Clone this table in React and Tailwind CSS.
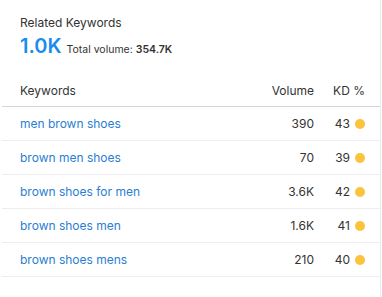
import React from 'react';

const rows = [
  { kw: 'men brown shoes', vol: '390', kd: 43 },
  { kw: 'brown men shoes', vol: '70', kd: 39 },
  { kw: 'brown shoes for men', vol: '3.6K', kd: 42 },
  { kw: 'brown shoes men', vol: '1.6K', kd: 41 },
  { kw: 'brown shoes mens', vol: '210', kd: 40 },
];

export default function App() {
  return (
    <div className="w-[381px] h-[297px] bg-white text-[#333] overflow-hidden border-r border-[#eceef1]" style={{ fontFamily: 'Inter, "Noto Sans", sans-serif' }}>
      <div className="pl-5 pt-[15px]">
        <div className="text-[12px] leading-[16px]">Related Keywords</div>
        <div className="flex items-baseline gap-[5px] mt-[3px] h-[24px]">
          <span className="text-[20px] leading-[24px] font-semibold text-[#1a8cf0]">1.0K</span>
          <span className="text-[10.5px]">Total volume: <span className="font-semibold">354.7K</span></span>
        </div>
      </div>
      <div className="ml-[2px] mt-[18px]">
        <div className="flex items-center h-[31px] pl-[18px] border-b border-[#d4d6dc] text-[12px]">
          <span className="flex-1">Keywords</span>
          <span className="w-[80px] text-right">Volume</span>
          <span className="w-[51px] text-right">KD %</span>
          <span className="w-[15px]" />
        </div>
        {rows.map((r) => (
          <div key={r.kw} className="flex items-center h-[34px] pl-[18px] border-b border-[#eceef1] text-[12px]">
            <span className="flex-1 text-[#2a7ed2]">{r.kw}</span>
            <span className="w-[80px] text-right">{r.vol}</span>
            <span className="w-[36px] text-right">{r.kd}</span>
            <span className="w-[15px] flex justify-end">
              <span className="w-[10px] h-[10px] rounded-full bg-[#fcc33c]" />
            </span>
            <span className="w-[15px]" />
          </div>
        ))}
      </div>
    </div>
  );
}
